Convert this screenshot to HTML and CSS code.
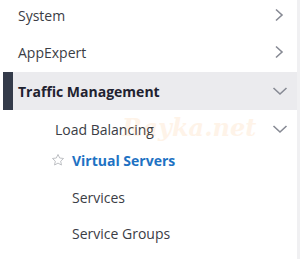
FILE: index.html
```html
<!DOCTYPE html>
<html lang="en">
<head>
    <meta charset="UTF-8">
    <title>Navigation</title>
    <link rel="stylesheet" href="styles.css">
</head>
<body>
    <div class="nav">
        <div class="row top first">
            <span class="label">System</span>
            <svg class="chev" width="10" height="14" viewBox="0 0 10 14"><path d="M2 1.5 L8 7 L2 12.5" /></svg>
        </div>
        <div class="row top">
            <span class="label">AppExpert</span>
            <svg class="chev" width="10" height="14" viewBox="0 0 10 14"><path d="M2 1.5 L8 7 L2 12.5" /></svg>
        </div>
        <div class="row top open">
            <span class="label">Traffic Management</span>
            <svg class="chev down" width="16" height="10" viewBox="0 0 16 10"><path d="M1.5 2 L8 8 L14.5 2" /></svg>
        </div>
        <div class="row sub">
            <span class="label">Load Balancing</span>
            <svg class="chev down" width="16" height="10" viewBox="0 0 16 10"><path d="M1.5 2 L8 8 L14.5 2" /></svg>
        </div>
        <div class="row leaf active">
            <svg class="star" width="14" height="14" viewBox="0 0 24 24"><path d="M12 2.5 L14.9 8.6 L21.5 9.4 L16.6 14 L17.9 20.6 L12 17.3 L6.1 20.6 L7.4 14 L2.5 9.4 L9.1 8.6 Z" /></svg>
            <span class="label">Virtual Servers</span>
        </div>
        <div class="row leaf">
            <span class="label">Services</span>
        </div>
        <div class="row leaf">
            <span class="label">Service Groups</span>
        </div>
        <span class="mark">Rayka.net</span>
    </div>
</body>
</html>
```

FILE: styles.css
```css
* {
    box-sizing: border-box;
}

body {
    margin: 0;
    background-color: white;
    font-family: 'Open Sans', 'Liberation Sans', sans-serif;
}

.nav {
    position: relative;
    width: 300px;
    height: 259px;
    border-right: 3px solid #f0f0f2;
}

.row {
    display: flex;
    align-items: center;
    height: 36px;
    font-size: 14px;
    color: #3b3d45;
}

.row .label {
    flex: 1;
}

.top {
    padding-left: 18px;
}

.first {
    height: 34px;
    padding-bottom: 4px;
}

.open {
    height: 38px;
    margin-top: 2px;
    background-color: #ebebee;
    border-left: 10px solid #343b4a;
    margin-left: 3px;
    padding-left: 5px;
    font-weight: bold;
    color: #1f2230;
}

.sub {
    height: 38px;
    padding-left: 55px;
}

.leaf {
    height: 36px;
    padding-left: 72px;
}

.active {
    height: 24px;
    margin-bottom: 7px;
    padding-left: 51px;
    font-weight: bold;
    color: #1e72c3;
}

.star {
    margin-right: 7px;
    fill: none;
    stroke: #b9bbc0;
    stroke-width: 1.6;
    stroke-linejoin: round;
}

.chev {
    margin-right: 13px;
    fill: none;
    stroke: #878a94;
    stroke-width: 1.6;
}

.chev.down {
    margin-right: 9px;
}

.mark {
    position: absolute;
    left: 122px;
    top: 113px;
    font-family: 'DejaVu Serif', serif;
    font-style: italic;
    font-weight: bold;
    font-size: 24px;
    color: #f6932a;
    opacity: 0.1;
    pointer-events: none;
}
```
